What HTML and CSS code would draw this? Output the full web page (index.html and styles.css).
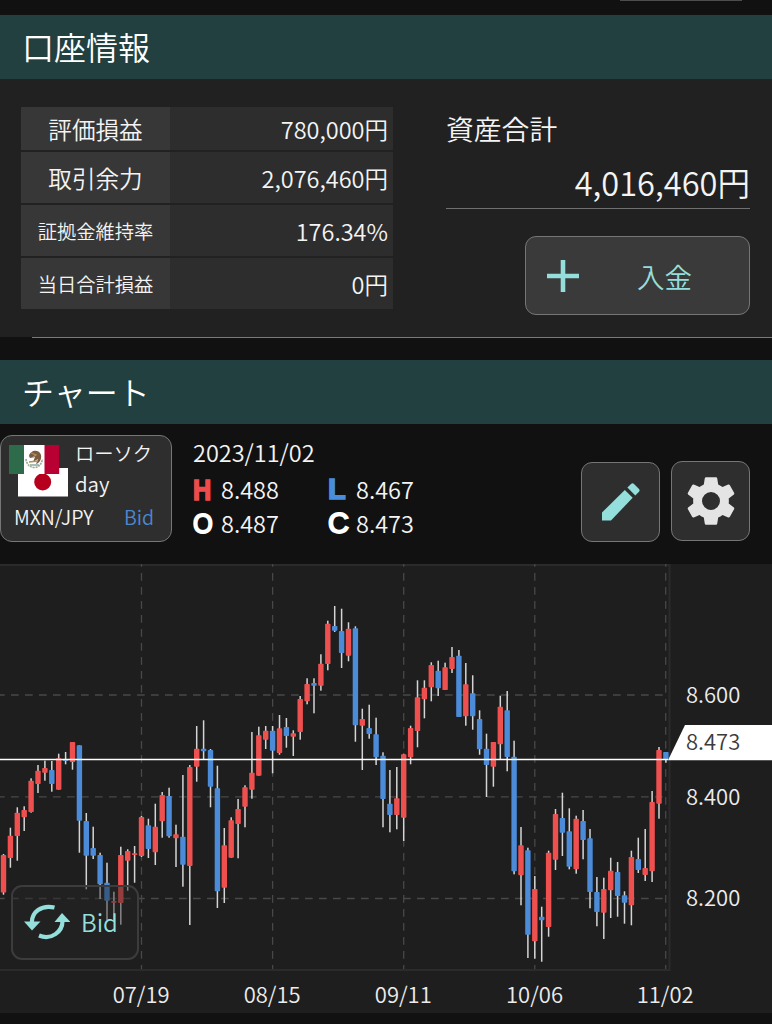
FILE: index.html
```html
<!DOCTYPE html>
<html lang="ja">
<head>
<meta charset="utf-8">
<title>口座情報</title>
<link rel="stylesheet" href="styles.css">
</head>
<body>
<div class="top-gap"><div class="top-edge"></div></div>
<h2 class="section-title">口座情報</h2>
<section class="account">
  <div class="summary">
    <div class="row first"><div class="label">評価損益</div><div class="value">780,000円</div></div>
    <div class="row"><div class="label">取引余力</div><div class="value">2,076,460円</div></div>
    <div class="row"><div class="label small">証拠金維持率</div><div class="value">176.34%</div></div>
    <div class="row"><div class="label small">当日合計損益</div><div class="value">0円</div></div>
  </div>
  <div class="assets">
    <div class="assets-title">資産合計</div>
    <div class="assets-total">4,016,460円</div>
    <button class="deposit">
      <svg width="32" height="32" viewBox="0 0 32 32"><path d="M16 0V32M0 16H32" stroke="#94dedb" stroke-width="4.6"/></svg>
      <span>入金</span>
    </button>
  </div>
</section>
<div class="divider"></div>
<h2 class="section-title">チャート</h2>
<section class="toolbar">
  <div class="pair" role="button">
    <span class="pair-top">
      <svg class="flags" width="60" height="54" viewBox="0 0 60 54">
        <rect x="9" y="24" width="50" height="28.500" fill="#fff"/>
        <circle cx="33.700" cy="38" r="8.500" fill="#b6001d"/>
        <rect x="0" y="1" width="50" height="29" fill="#fff"/>
        <rect x="0" y="1" width="15" height="29" fill="#2d6b4b"/>
        <rect x="35.500" y="1" width="14.700" height="29" fill="#b80033"/>
        <path d="M17 15Q18 23 25.500 23.500Q32 23 33.500 15" fill="none" stroke="#9eac91" stroke-width="1.700" stroke-dasharray="2 .8"/>
        <path d="M20 12C21 7 28 5 31 9C34 13 31 19 27 20L29 15L24 18L26 13L21 14Z" fill="#795c43"/>
        <path d="M22 9L27 11L24 13M20 18L29 17" fill="none" stroke="#b49058" stroke-width="1.300"/>
        <path d="M21 21H30" stroke="#8aa9a4" stroke-width="1.500"/>
      </svg>
      <span class="pair-type"><span>ローソク</span><span class="day">day</span></span>
    </span>
    <span class="pair-bottom"><span>MXN/JPY</span><span class="side">Bid</span></span>
  </div>
  <div class="quote">
    <div class="date">2023/11/02</div>
    <div class="prices">
      <div class="price"><b class="mark high">H</b><span>8.488</span></div>
      <div class="price"><b class="mark low">L</b><span>8.467</span></div>
      <div class="price"><b class="mark open">O</b><span>8.487</span></div>
      <div class="price"><b class="mark close">C</b><span>8.473</span></div>
    </div>
  </div>
  <div class="tools">
    <button class="tool pencil">
      <svg width="38" height="38" viewBox="0 0 38 38" fill="#94dedb"><path d="M0 29.500L22.800 7L30.700 14.700L9 37.500H0Z"/><path d="M25.400 4.500L29 .9Q30.500-.5 32 .9L37 5.900Q38.200 7.300 37 8.700L33.300 12.400Z"/></svg>
    </button>
    <button class="tool gear">
      <svg width="48" height="48" viewBox="-24 -24 48 48" fill="#e4e4e4" fill-rule="evenodd"><path d="M-5-23.800H5Q6-23.800 6.200-22.800L7.200-16.500Q9.500-15.500 11.500-14L17.200-16.400Q18.300-16.700 18.900-15.800L23.200-8Q23.500-7.200 22.900-6.600L17.700-2.600Q18 0 17.700 2.600L22.900 6.600Q23.500 7.200 23.200 8L18.900 15.800Q18.300 16.700 17.200 16.400L11.500 14Q9.500 15.500 7.200 16.500L6.200 22.800Q6 23.800 5 23.800H-5Q-6 23.800-6.200 22.800L-7.200 16.500Q-9.500 15.500-11.500 14L-17.200 16.400Q-18.300 16.700-18.900 15.800L-23.200 8Q-23.500 7.200-22.900 6.600L-17.700 2.600Q-18 0-17.700-2.600L-22.900-6.600Q-23.500-7.200-23.200-8L-18.900-15.800Q-18.300-16.700-17.200-16.400L-11.500-14Q-9.500-15.500-7.200-16.500L-6.200-22.800Q-6-23.800-5-23.800ZM0-9A9 9 0 1 0 0 9A9 9 0 0 0 0-9Z"/></svg>
    </button>
  </div>
</section>
<section class="chart">
  <svg width="772" height="450" viewBox="0 564 772 450">
    <g class="frame"><path d="M0 565H669.500V970H0"/></g>
    <g class="grid">
      <path d="M0 695H666M0 796.800H666M0 898.500H666" stroke-dasharray="7.700 6.300" stroke-dashoffset="3"/>
      <path d="M141.500 563V969M272.600 563V969M403.700 563V969M534.800 563V969M665.700 563V969" stroke-dasharray="7.700 6.300" stroke-dashoffset="4"/>
    </g>
    <g id="candles"></g>
    <path d="M0 759.500H668" stroke="#fff" stroke-width="1.700"/>
    <path d="M668 760.300L685 725H772V760.300Z" fill="#fff"/>
    <g class="axis">
      <text x="686" y="703">8.600</text>
      <text x="686" y="750" class="current">8.473</text>
      <text x="686" y="804.500">8.400</text>
      <text x="686" y="906">8.200</text>
      <g text-anchor="middle">
        <text x="141.200" y="1002.500">07/19</text>
        <text x="272.200" y="1002.500">08/15</text>
        <text x="403.300" y="1002.500">09/11</text>
        <text x="534.500" y="1002.500">10/06</text>
        <text x="665.200" y="1002.500">11/02</text>
      </g>
    </g>
  </svg>
  <button class="bid-toggle">
    <svg width="46" height="36" viewBox="0 0 46 36">
      <g fill="none" stroke="#94dedb" stroke-width="4.200"><path d="M7.800 18.500C7.800 8 17 .5 30.500 3.500"/><path d="M38.500 16C39 28 27 36.500 15 31.500"/></g>
      <path d="M0 17.500H16.500L8 26.500Z" fill="#94dedb"/><path d="M30.500 18H46.500L38 9Z" fill="#94dedb"/>
    </svg>
    <span>Bid</span>
  </button>
</section>
<script src="chart.js"></script>
</body>
</html>
```
FILE: styles.css
```css
* { box-sizing: border-box; }
body {
  margin: 0;
  height: 1024px;
  overflow: hidden;
  background: #111;
  color: #f4f4f4;
  font-family: "Noto Sans CJK JP", sans-serif;
  font-weight: 350;
}
button { margin: 0; padding: 0; font: inherit; color: inherit; border: 1.5px solid #767676; }
svg { display: block; }
.top-gap { height: 15px; padding-left: 620px; }
.top-edge { width: 122px; height: 1px; background: #4c4c4c; }
.section-title {
  margin: 0;
  height: 64px;
  padding-left: 22px;
  background: #22403f;
  font-size: 32px;
  font-weight: 350;
  line-height: 63px;
  color: #fff;
}
.account {
  display: flex;
  justify-content: space-between;
  height: 258px;
  padding: 28px 22px 0 21px;
  background: #212121;
}
.summary { width: 372px; display: flex; flex-direction: column; gap: 2px; }
.row { display: grid; grid-template: 51px / 149px 1fr; height: 51px; background: #2d2d2d; line-height: 53px; }
.row.first { grid-template-rows: 43px; height: 43px; line-height: 45px; }
.label { background: #373737; text-align: center; font-size: 23.6px; }
.label.small { font-size: 19.3px; }
.value { padding-right: 5px; text-align: right; font-size: 23.5px; }
.assets { width: 304px; display: flex; flex-direction: column; }
.assets-title { height: 44px; font-size: 27.8px; line-height: 42px; }
.assets-total { height: 58px; border-bottom: 1.5px solid #707070; text-align: right; font-size: 32.6px; line-height: 62px; }
.deposit {
  display: flex;
  align-items: center;
  gap: 58px;
  align-self: flex-end;
  width: 225px;
  height: 79px;
  margin-top: 27px;
  padding-left: 21px;
  border-radius: 11px;
  background: #3a3a3a;
  color: #94dedb;
  font-size: 27.5px;
}
.divider { height: 23px; margin-left: 32px; border-top: 1px solid #7a7a7a; }
.toolbar { display: flex; height: 140px; padding-top: 11px; }
.pair { width: 172px; height: 107px; padding: 8px 17px 0 8px; border: 1.5px solid #767676; border-radius: 12px; background: #2e2e2e; text-align: left; }
.pair-top { display: flex; gap: 6px; height: 58px; }
.pair-type { display: flex; flex-direction: column; font-size: 19.3px; line-height: 19px; }
.day { font-size: 20.5px; line-height: 41px; }
.pair-bottom { display: flex; justify-content: space-between; padding-left: 5px; font-size: 19.6px; line-height: 29px; }
.side { color: #4a88d0; }
.quote { width: 250px; margin-left: 21px; font-size: 23.5px; }
.date { line-height: 35px; }
.prices { display: grid; grid-template-columns: 135px 1fr; grid-auto-rows: 34px; line-height: 35px; padding-top: 2px; }
.price { display: flex; }
.mark {
  flex: none;
  width: 28px;
  height: 34px;
  font-family: "Liberation Sans", sans-serif;
  font-size: 29px;
  line-height: 37px;
  transform-origin: 0 50%;
  -webkit-text-stroke: 1.6px currentColor;
  stroke-linejoin: round;
}
.high { color: #ee4c4c; transform: scaleX(.87); }
.low { color: #4a8ddd; line-height: 34px; }
.open { font-size: 27px; color: #fff; font-weight: 400; transform: scaleX(.94); -webkit-text-stroke-width: 1.9px; }
.close { font-size: 29px; color: #fff; font-weight: 400; line-height: 35px; -webkit-text-stroke-width: 1.9px; }
.tools { display: flex; gap: 11px; margin: 26px 22px 0 auto; }
.tool { display: grid; place-items: center; width: 79px; height: 80px; border-radius: 11px; background: #2e2e2e; }
.pencil { margin-top: 1px; }
.chart { position: relative; height: 449px; background: #1e1e1e; overflow: hidden; }
.frame path { fill: none; stroke: #2b2b2b; stroke-width: 2; }
.grid path { fill: none; stroke: #484848; stroke-width: 1.3; }
.axis text { fill: #ececec; font-size: 22px; }
.axis .current { fill: #3c3c3c; }
.wick { fill: #d4d4d4; }
.up { fill: #ee5050; }
.down { fill: #4b8bd8; }
.bid-toggle {
  position: absolute;
  left: 11px;
  top: 321px;
  display: flex;
  align-items: center;
  gap: 11px;
  width: 128px;
  height: 75px;
  padding: 0 0 2px 11px;
  border: 2px solid #3c3c3c;
  border-radius: 11px;
  background: rgba(37, 37, 37, .45);
  color: #94dedb;
  font-size: 24px;
}
```
FILE: chart.js
```javascript
// Each candle: direction, wick top, body top, body bottom, wick bottom.
const candles = `
u 854 855 892.5 894.7|u 827.7 835.7 858 867.7|u 807.3 812.7 836 860.7|u 806.3 810 817.3 831|u 778.3 780.7 812 812.7
u 765 770.7 784 793|u 760.7 768 772.7 780.7|d 761 770 784 791.7|u 753.7 758.3 789.7 789.7|d 752 759.7 761 764.3
u 742 742 762 769.7|d 745.3 745.3 820.7 852.7|d 813 821 855.7 889.3|d 826.7 848 855.7 859|d 852.7 855 884.3 899
d 862.7 882.7 900.7 920|u 891.7 901 902.7 920|u 846.7 855 903 924.7|u 849.3 851 860.7 890.7|u 846 853.3 855 882.7
u 816 817 856 857|d 818.7 825.3 849 858|u 803.7 826.7 852.3 865|u 792 795 821.3 837.7|d 787.7 796 836.3 837.7
u 824.7 834.3 838.3 867|d 775 836.7 864.7 886.7|u 765 767 866 925|u 726 748.7 766.7 781.7|d 720.3 748.7 751.3 759.3
d 749 750 786.7 807.3|d 765.7 788.3 891.3 908|u 828 845.3 887.7 903|u 817.3 820.3 857.7 857.7|u 799 809 824 858.3
u 785.3 787.3 806.7 827.3|u 732 772.7 789.7 798.7|u 726.7 735.3 775.7 775.7|u 726 730.7 739.7 749|d 726 730.7 750.7 773.3
u 715 728.3 753 754.7|d 718 727 736 747.7|u 730.3 733.3 736.7 756|u 696 699 732 739.7|u 678.3 684 701.3 704.3
d 678.3 683 685.7 713.3|u 654.3 663.7 685.7 690.7|u 620.7 623.7 664 670.3|d 606 626 630.7 632|d 608.7 631 653 668
u 622.3 628.7 655.7 661.3|d 626.3 628.3 725.3 741.7|u 708.7 719 725.7 770|d 704.7 728 734 738.7|d 717.7 734.3 757.3 765
d 752.3 755.7 799 827.3|d 770 803.7 815 832.3|u 767 798.3 815 829.3|u 753.7 754.3 817.7 841|u 725.7 728 757.3 764.3
u 680.3 697.3 731 747.3|u 680.3 687.7 699.3 718.3|u 662.3 665 687.3 701.3|d 660.7 670.7 688.3 696|u 662.7 667.3 690 690
u 647 657 669 673|d 650 655.7 717 717|u 663 684.3 716.3 725.7|d 675.3 693.3 716.3 729.7|d 710.3 719 749.3 754.7
d 733.7 748.7 765 797|u 742 742 766.7 786.7|u 695.7 706.7 744.3 759.3|d 691 710.3 757 771.3|d 740.7 756.7 871.3 874.3
u 827 845.3 875.3 905.3|d 847.7 850.3 934.7 958|u 876 889 941.3 958.7|d 906.7 916.7 920.3 961.7|u 850.7 852.7 927 936.7
u 809 814 859.7 870|d 792.7 818 832.7 856|d 808.3 831.3 866.7 869.3|u 815.7 818.7 869.3 873.7|d 810 821 840 859.3
d 829 838.3 892 908.3|d 877 892 912 926.3|u 877.7 889 912.7 939|u 857.7 870.7 890.3 918|d 862 872 896 916.7
d 891.3 895.3 902.7 923.7|u 850.7 857 905.3 925.3|d 837.7 859 870 873|u 829 868 875 881|u 791 802 871.3 882
u 747 750 803.7 818.7|d 752 752 760 762.7`;

const layer = document.getElementById("candles");
const bar = (cls, x, y, w, h, r) => {
  const el = document.createElementNS("http://www.w3.org/2000/svg", "rect");
  const attrs = { class: cls, x, y, width: w, height: h, rx: r };
  for (const key in attrs) el.setAttribute(key, attrs[key]);
  layer.appendChild(el);
};
candles.trim().split(/[|\n]/).forEach((line, i) => {
  const [dir, high, top, bottom, low] = line.split(" ");
  const x = 3.5 + i * 6.9;
  bar("wick", x - 0.75, +high, 1.5, low - high, 0);
  bar(dir === "u" ? "up" : "down", x - 2.7, +top, 5.4, bottom - top, 0.7);
});
```
